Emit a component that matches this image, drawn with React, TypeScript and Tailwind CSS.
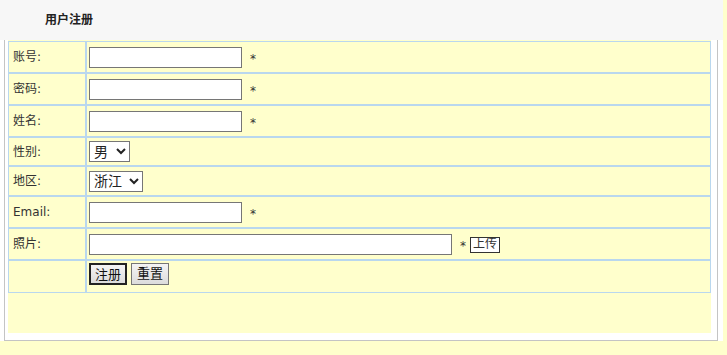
import type { ReactNode } from 'react';

const font = "font-['DejaVu_Sans','Noto_Sans_CJK_SC',sans-serif]";

function Row({ label, h, last, children }: { label: string; h: string; last?: boolean; children?: ReactNode }) {
  return (
    <div className={`flex ${h} ${last ? '' : 'border-b-2 border-[#b9d7ee]'}`}>
      <div className="flex w-[78px] shrink-0 items-center border-r-2 border-[#b9d7ee] pl-[4px] text-[12px] text-[#333]">
        {label}
      </div>
      <div className="flex flex-1 items-center pl-[2px]">{children}</div>
    </div>
  );
}

function Field({ wide }: { wide?: boolean }) {
  return (
    <input
      type="text"
      className={`h-[21px] ${wide ? 'w-[363px]' : 'w-[153px]'} border border-[#767676] bg-white px-1 text-[13px] outline-none`}
    />
  );
}

const Star = () => <span className="ml-[8px] mt-[3px] text-[12px] text-[#333]">*</span>;

export default function App() {
  return (
    <div className={`min-h-screen bg-[#ffffcc] ${font}`}>
      <div className="w-[723px] bg-white">
        <div className="h-[40px] bg-[#f7f7f7] pl-[45px] text-[12px] font-bold leading-[40px] text-[#222]">
          用户注册
        </div>
        <div className="ml-[4px] w-[714px] border-x border-b border-[#c4c4c4] pb-[7px] pl-[3px] pr-[6px]">
          <div className="h-[293px] bg-[#ffffcc] pt-[1px]">
            <div className="border border-[#b9d7ee]">
              <Row label="账号:" h="h-[32px]">
                <Field />
                <Star />
              </Row>
              <Row label="密码:" h="h-[32px]">
                <input type="password" className="h-[21px] w-[153px] border border-[#767676] bg-white px-1 outline-none" />
                <Star />
              </Row>
              <Row label="姓名:" h="h-[32px]">
                <Field />
                <Star />
              </Row>
              <Row label="性别:" h="h-[29px]">
                <select className="h-[21px] w-[41px] border border-[#767676] bg-white text-[14px] text-[#222]">
                  <option>男</option>
                  <option>女</option>
                </select>
              </Row>
              <Row label="地区:" h="h-[30px]">
                <select className="h-[21px] w-[54px] border border-[#767676] bg-white text-[14px] text-[#222]">
                  <option>浙江</option>
                  <option>江苏</option>
                </select>
              </Row>
              <Row label="Email:" h="h-[32px]">
                <Field />
                <Star />
              </Row>
              <Row label="照片:" h="h-[32px]">
                <Field wide />
                <Star />
                <button className="ml-[4px] mt-[1px] h-[16px] w-[30px] border border-[#333] bg-white text-[12px] leading-[13px] text-[#333]">
                  上传
                </button>
              </Row>
              <Row label="" h="h-[31px]" last>
                <div className="flex gap-[4px] self-start pt-[2px]">
                  <button className="h-[22px] w-[38px] border-2 border-[#222] bg-gradient-to-b from-[#f4f4f4] to-[#dcdcdc] text-[13px] text-[#111]">
                    注册
                  </button>
                  <button className="h-[22px] w-[38px] border border-[#767676] bg-gradient-to-b from-[#f4f4f4] to-[#dcdcdc] text-[13px] text-[#111]">
                    重置
                  </button>
                </div>
              </Row>
            </div>
          </div>
        </div>
      </div>
    </div>
  );
}
